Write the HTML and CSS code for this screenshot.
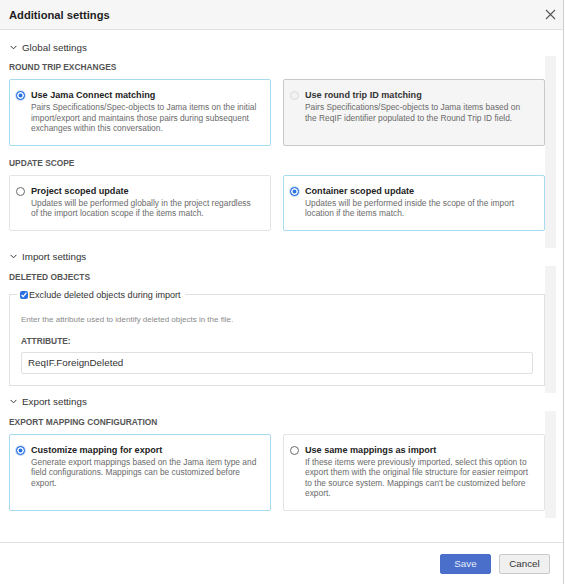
FILE: index.html
```html
<!DOCTYPE html>
<html lang="en">
<head>
    <meta charset="UTF-8">
    <meta name="viewport" content="width=device-width, initial-scale=1.0">
    <title>Additional settings</title>
    <link rel="stylesheet" href="styles.css">
</head>
<body>

<div class="dialog">
    <div class="dialog-header">
        <h1 class="dialog-title">Additional settings</h1>
        <button class="close-btn" aria-label="Close">
            <svg width="11" height="11" viewBox="0 0 11 11"><path d="M1 1L10 10M10 1L1 10" stroke="#555" stroke-width="1.1" fill="none"/></svg>
        </button>
    </div>

    <div class="dialog-body">
        <!-- global -->
        <div class="group">
            <div class="group-head">
                <svg class="chevron" width="7" height="5" viewBox="0 0 7 5"><path d="M0.6 0.9L3.5 3.8L6.4 0.9" fill="none" stroke="#333" stroke-width="1"/></svg>
                Global settings
            </div>
            <div class="group-body pad-lg">
                <div class="group-content">
                    <div class="section-label">Round trip exchanges</div>
                    <div class="options">
                        <div class="option selected">
                            <span class="radio checked"></span>
                            <div class="option-text">
                                <div class="option-title">Use Jama Connect matching</div>
                                <div class="option-desc">Pairs Specifications/Spec-objects to Jama items on the initial import/export and maintains those pairs during subsequent exchanges within this conversation.</div>
                            </div>
                        </div>
                        <div class="option disabled">
                            <span class="radio off"></span>
                            <div class="option-text">
                                <div class="option-title">Use round trip ID matching</div>
                                <div class="option-desc">Pairs Specifications/Spec-objects to Jama items based on the ReqIF identifier populated to the Round Trip ID field.</div>
                            </div>
                        </div>
                    </div>

                    <div class="section-label">Update scope</div>
                    <div class="options">
                        <div class="option">
                            <span class="radio"></span>
                            <div class="option-text">
                                <div class="option-title">Project scoped update</div>
                                <div class="option-desc">Updates will be performed globally in the project regardless of the import location scope if the items match.</div>
                            </div>
                        </div>
                        <div class="option selected">
                            <span class="radio checked"></span>
                            <div class="option-text">
                                <div class="option-title">Container scoped update</div>
                                <div class="option-desc">Updates will be performed inside the scope of the import location if the items match.</div>
                            </div>
                        </div>
                    </div>
                </div>
                <div class="scroll-track"></div>
            </div>
        </div>

        <!-- import -->
        <div class="group">
            <div class="group-head">
                <svg class="chevron" width="7" height="5" viewBox="0 0 7 5"><path d="M0.6 0.9L3.5 3.8L6.4 0.9" fill="none" stroke="#333" stroke-width="1"/></svg>
                Import settings
            </div>
            <div class="group-body">
                <div class="group-content">
                    <div class="section-label">Deleted objects</div>
                    <fieldset class="deleted-box">
                        <legend><label><input type="checkbox" checked>Exclude deleted objects during import</label></legend>
                        <p class="hint">Enter the attribute used to identify deleted objects in the file.</p>
                        <div class="field-label">ATTRIBUTE:</div>
                        <input class="text-input" type="text" value="ReqIF.ForeignDeleted">
                    </fieldset>
                </div>
                <div class="scroll-track"></div>
            </div>
        </div>

        <!-- export -->
        <div class="group">
            <div class="group-head">
                <svg class="chevron" width="7" height="5" viewBox="0 0 7 5"><path d="M0.6 0.9L3.5 3.8L6.4 0.9" fill="none" stroke="#333" stroke-width="1"/></svg>
                Export settings
            </div>
            <div class="group-body">
                <div class="group-content">
                    <div class="section-label">Export mapping configuration</div>
                    <div class="options">
                        <div class="option selected">
                            <span class="radio checked"></span>
                            <div class="option-text">
                                <div class="option-title">Customize mapping for export</div>
                                <div class="option-desc">Generate export mappings based on the Jama item type and field configurations. Mappings can be customized before export.</div>
                            </div>
                        </div>
                        <div class="option">
                            <span class="radio"></span>
                            <div class="option-text">
                                <div class="option-title">Use same mappings as import</div>
                                <div class="option-desc">If these items were previously imported, select this option to export them with the original file structure for easier reimport to the source system. Mappings can't be customized before export.</div>
                            </div>
                        </div>
                    </div>
                </div>
                <div class="scroll-track"></div>
            </div>
        </div>
    </div>

    <div class="dialog-footer">
        <button class="btn btn-primary">Save</button>
        <button class="btn">Cancel</button>
    </div>
</div>

</body>
</html>
```

FILE: styles.css
```css
body {
    margin: 0;
    font-family: "Liberation Sans", Arial, sans-serif;
    color: #222;
    background: #fff;
}
.dialog {
    width: 564px;
    height: 584px;
    box-sizing: border-box;
    border-right: 1px solid #cfcfcf;
    display: flex;
    flex-direction: column;
}
.dialog-header {
    height: 30px;
    box-sizing: border-box;
    background-color: #f6f6f6;
    border-bottom: 1px solid #e2e2e2;
    display: flex;
    align-items: center;
    justify-content: space-between;
    padding: 0 6px 0 9px;
}
.dialog-title {
    margin: 0;
    font-size: 11.2px;
    font-weight: bold;
    color: #1e1e1e;
}
.close-btn {
    border: none;
    background: none;
    padding: 0;
    width: 12px;
    height: 12px;
    display: flex;
}
.dialog-body {
    flex: 1;
    padding: 8px 7px 0 0;
}
.group-head {
    height: 18px;
    display: flex;
    align-items: center;
    gap: 5px;
    padding-left: 10px;
    font-size: 9.8px;
    color: #333;
}
.group-body {
    display: flex;
}
.group-content {
    flex: 1;
    padding: 6px 0 7px 9px;
}
.pad-lg .group-content {
    padding-bottom: 17px;
}
.scroll-track {
    width: 11px;
    flex: none;
    background-color: #f3f3f3;
}
.section-label {
    font-size: 8.4px;
    line-height: 10px;
    font-weight: bold;
    color: #555;
    text-transform: uppercase;
    margin-bottom: 7px;
}
.options + .section-label {
    margin-top: 12px;
}
.options {
    display: grid;
    grid-template-columns: 1fr 1fr;
    gap: 12px;
}
.option {
    display: flex;
    gap: 6px;
    padding: 10px 12px 11px 6px;
    border: 1px solid #e4e4e4;
    border-radius: 2px;
    background: #fff;
}
.option.selected {
    border-color: #a7dbee;
}
.option.disabled {
    background-color: #f5f5f5;
    border-color: #c9c9c9;
}
.radio {
    width: 9px;
    height: 9px;
    margin-top: 1px;
    flex: none;
    box-sizing: border-box;
    border-radius: 50%;
    border: 1px solid #6a6a6a;
    background: #fff;
}
.radio.checked {
    border-color: #2a72e4;
    background: #2a72e4;
    box-shadow: inset 0 0 0 1.5px #fff, 0 0 0 1px #cfe0f8;
}
.radio.off {
    border-color: #d9d9d9;
    background: #f2f2f2;
}
.option-title {
    font-size: 9.1px;
    line-height: 11px;
    font-weight: bold;
    color: #222;
    margin-bottom: 1px;
}
.option-desc {
    font-size: 8.4px;
    line-height: 10.5px;
    color: #6a6a6a;
}
.disabled .option-title {
    color: #333;
}
.deleted-box {
    margin: 1px 0 0;
    padding: 0 11px 11px 11px;
    border: 1px solid #e0e0e0;
    min-width: 0;
}
.deleted-box legend {
    margin-left: -4px;
    padding: 0 4px 0 3px;
    font-size: 9.1px;
    line-height: 12px;
    color: #333;
}
.deleted-box legend label {
    display: flex;
    align-items: center;
    gap: 1px;
}
.deleted-box input[type="checkbox"] {
    width: 8px;
    height: 8px;
    margin: 0;
    accent-color: #2a6fe3;
}
.hint {
    margin: 14px 0 0;
    font-size: 8px;
    line-height: 10px;
    color: #8a8a8a;
}
.field-label {
    margin-top: 11px;
    font-size: 8.4px;
    line-height: 10px;
    font-weight: bold;
    color: #555;
}
.text-input {
    display: block;
    width: 100%;
    height: 22px;
    margin-top: 6px;
    box-sizing: border-box;
    padding: 0 6px;
    border: 1px solid #e0e0e0;
    border-radius: 2px;
    font-family: inherit;
    font-size: 9.8px;
    color: #333;
}
.dialog-footer {
    height: 42px;
    box-sizing: border-box;
    border-top: 1px solid #e2e2e2;
    display: flex;
    align-items: center;
    justify-content: flex-end;
    gap: 8px;
    padding-right: 13px;
}
.btn {
    width: 51px;
    height: 20px;
    padding: 0;
    font-family: inherit;
    font-size: 9.8px;
    color: #333;
    background-color: #f0f0f0;
    border: 1px solid #cacaca;
    border-radius: 2px;
}
.btn-primary {
    color: #e6ecfa;
    background-color: #4a6fcb;
    border-color: #4a6fcb;
}
```
